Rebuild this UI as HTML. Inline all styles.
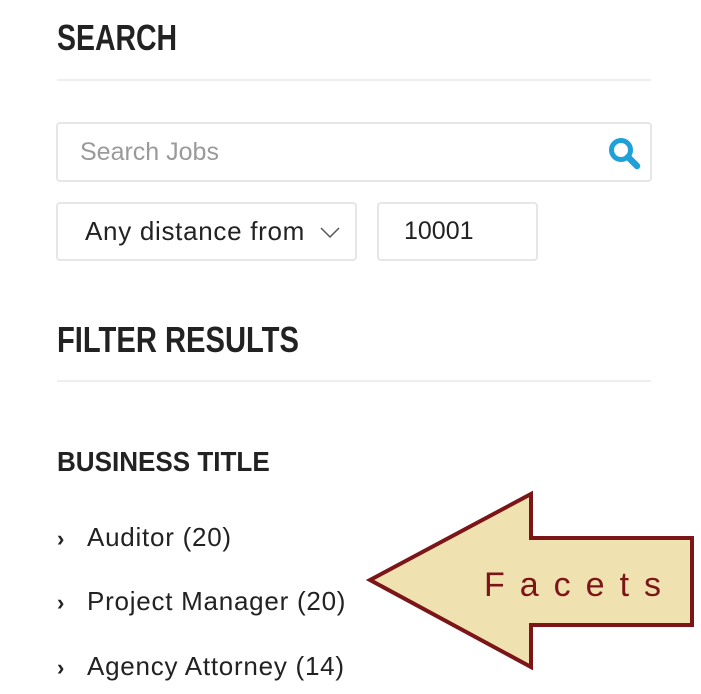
<!DOCTYPE html>
<html><head><style>
body{margin:0;width:701px;height:694px;background:#fff;position:relative;overflow:hidden;font-family:"Liberation Sans",sans-serif;color:#222}
.h{position:absolute;left:57px;font-family:"Liberation Sans",sans-serif;font-weight:bold;color:#222;transform-origin:0 0;white-space:nowrap}
.line{position:absolute;left:57px;width:594px;height:2px;background:#eee}
.box{position:absolute;border:2px solid #e6e6e6;border-radius:4px;box-sizing:border-box;font-size:25px;display:flex;align-items:center}
.li{position:absolute;left:57px;font-size:26px;letter-spacing:0.75px;color:#222;white-space:nowrap}
.li b{display:inline-block;width:30px;font-size:22px}
</style></head><body>
<div class="h" style="top:17px;font-size:36px;transform:scaleX(0.79)">SEARCH</div>
<div class="line" style="top:79px"></div>
<div class="box" style="left:56px;top:122px;width:596px;height:60px;padding-left:22px;color:#9a9a9a">Search Jobs
<svg style="position:absolute;right:9px;top:12px" width="34" height="34" viewBox="0 0 34 34"><circle cx="14" cy="14" r="9.5" fill="none" stroke="#1ea0d8" stroke-width="5"/><path d="M21 21L30 30" stroke="#1ea0d8" stroke-width="6.5" stroke-linecap="round"/></svg></div>
<div class="box" style="left:56px;top:202px;width:301px;height:59px;padding-left:27px;font-size:26px;letter-spacing:0.7px">Any distance from
<svg style="position:absolute;left:262px;top:23px" width="20" height="12" viewBox="0 0 20 12"><path d="M1 1L10 10L19 1" fill="none" stroke="#555" stroke-width="1.5"/></svg></div>
<div class="box" style="left:377px;top:202px;width:161px;height:59px;padding-left:25px">10001</div>
<div class="h" style="top:319px;font-size:36px;transform:scaleX(0.81)">FILTER RESULTS</div>
<div class="line" style="top:380px"></div>
<div class="h" style="top:446px;font-size:28px;transform:scaleX(0.93)">BUSINESS TITLE</div>
<div class="li" style="top:522px"><b>›</b>Auditor (20)</div>
<div class="li" style="top:586px"><b>›</b>Project Manager (20)</div>
<div class="li" style="top:651px"><b>›</b>Agency Attorney (14)</div>
<svg style="position:absolute;left:0;top:0" width="701" height="694">
<polygon points="370,580 531,494 531,538 692,538 692,625 531,625 531,667" fill="#efe2b0" stroke="#7b1518" stroke-width="4" stroke-linejoin="miter"/>
<text x="484" y="596" font-family="Liberation Sans,sans-serif" font-size="34" letter-spacing="15" fill="#7b1518">Facets</text>
</svg>
</body></html>
